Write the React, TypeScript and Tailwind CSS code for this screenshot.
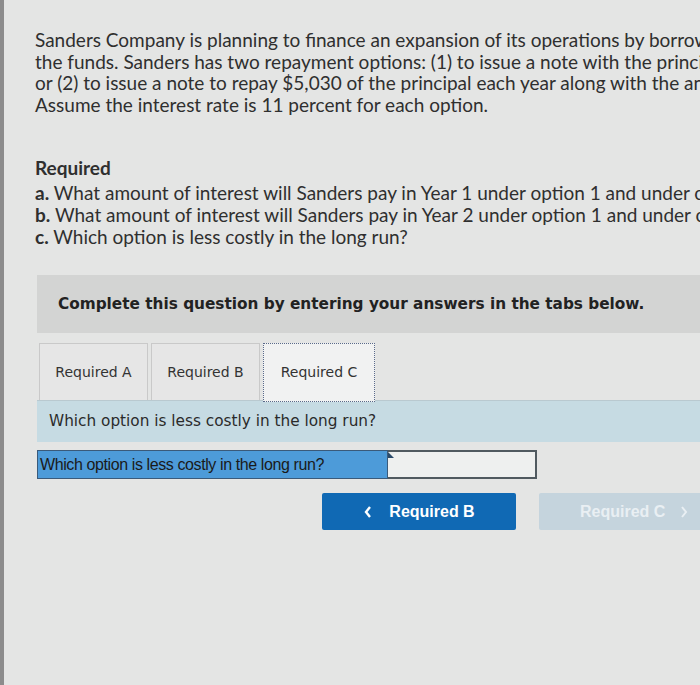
const App = () => {
  return (
    <div className="flex min-h-[685px] w-[700px] overflow-hidden bg-[#e4e5e4]">
      <div className="w-[4px] shrink-0 bg-[#8c8c8c]" />
      <div className="flex-1 pl-[31px] pt-[29px] font-['Lato',sans-serif] text-[#2f2f2f]">
        <p className="whitespace-nowrap text-[19px] leading-[21.5px]">
          Sanders Company is planning to finance an expansion of its operations by borrowing
          <br />
          the funds. Sanders has two repayment options: (1) to issue a note with the principal due
          <br />
          or (2) to issue a note to repay $5,030 of the principal each year along with the annual
          <br />
          Assume the interest rate is 11 percent for each option.
        </p>

        <div className="mt-[42px] whitespace-nowrap text-[19px] leading-[22px]">
          <p className="mb-[3px] font-bold">Required</p>
          <p>
            <span className="font-bold">a.</span> What amount of interest will Sanders pay in Year 1 under option 1 and under option 2?
          </p>
          <p>
            <span className="font-bold">b.</span> What amount of interest will Sanders pay in Year 2 under option 1 and under option 2?
          </p>
          <p>
            <span className="font-bold">c.</span> Which option is less costly in the long run?
          </p>
        </div>

        <div className="ml-[2px] mt-[27px] flex h-[58px] items-center bg-[#d3d4d3] pl-[21px]">
          <span className="whitespace-nowrap font-['DejaVu_Sans',sans-serif] text-[15.3px] font-bold text-[#222]">
            Complete this question by entering your answers in the tabs below.
          </span>
        </div>

        <div className="ml-[4px] mt-[10px] flex gap-[3px] font-['DejaVu_Sans',sans-serif] text-[14px] text-[#333]">
          <div className="flex h-[57px] w-[109px] items-center justify-center border border-b-0 border-[#c9c9c9] bg-[#e6e6e6]">
            Required A
          </div>
          <div className="flex h-[57px] w-[109px] items-center justify-center border border-b-0 border-[#c9c9c9] bg-[#e6e6e6]">
            Required B
          </div>
          <div className="flex h-[59px] w-[112px] items-center justify-center border border-dotted border-[#5a6a8a] bg-[#f1f2f2]">
            Required C
          </div>
        </div>

        <div className="ml-[2px] -mt-[2px] flex h-[42px] items-center border-t border-[#b9c9d0] bg-[#c6dbe3] pl-[12px] font-['DejaVu_Sans',sans-serif] text-[15.3px] text-[#2a2a2a]">
          Which option is less costly in the long run?
        </div>

        <div className="ml-[2px] mt-[8px] flex h-[29px] w-[500px]">
          <div className="flex w-[351px] items-center border border-[#3a5a7a] bg-[#4d9bd9] pl-[2px] font-['Liberation_Sans',sans-serif] text-[16px] tracking-[-0.4px] text-[#1a1a1a]">
            Which option is less costly in the long run?
          </div>
          <div className="relative flex-1 border-2 border-l-0 border-[#505a60] bg-[#eef0ef]">
            <div className="absolute left-0 top-0 h-0 w-0 border-l-[6px] border-t-[6px] border-l-[#2a4a6a] border-t-transparent" />
          </div>
        </div>

        <div className="mt-[14px] flex gap-[23px] pl-[287px] font-['Liberation_Sans',sans-serif] text-[16px] font-bold">
          <div className="flex h-[37px] w-[194px] items-center justify-center gap-[16px] rounded-[2px] bg-[#1069b4] text-white">
            <svg width="10" height="14" viewBox="0 0 10 14" fill="none">
              <path d="M7 2 L3 7 L7 12" stroke="white" strokeWidth="2.4" />
            </svg>
            <span>Required B</span>
          </div>
          <div className="flex h-[37px] flex-1 items-center gap-[14px] rounded-l-[2px] bg-[#c5d4dd] pl-[41px] text-[#e9eff3]">
            <span>Required C</span>
            <svg width="10" height="14" viewBox="0 0 10 14" fill="none">
              <path d="M3 2 L7 7 L3 12" stroke="#e9eff3" strokeWidth="2" />
            </svg>
          </div>
        </div>
      </div>
    </div>
  );
};

export default App;
